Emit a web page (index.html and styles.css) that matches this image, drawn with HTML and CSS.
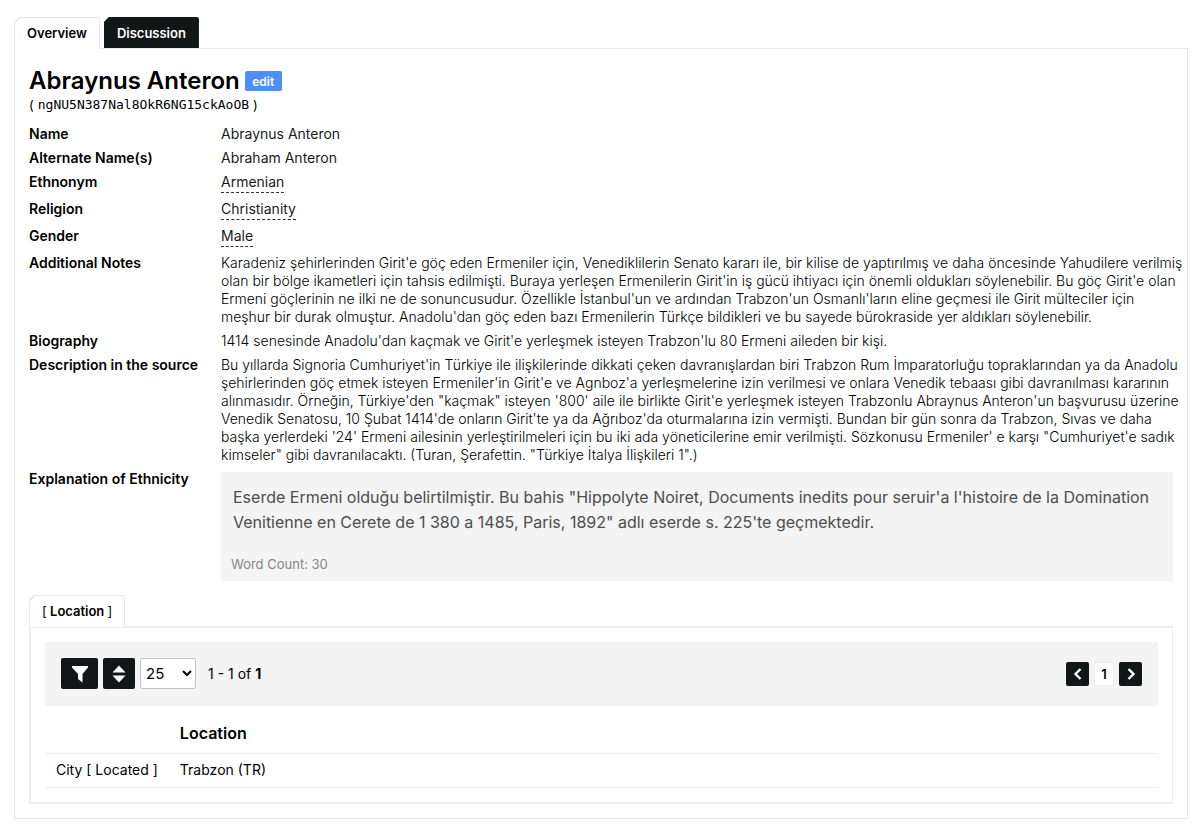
FILE: index.html
```html
<!DOCTYPE html>
<html lang="tr">
<head>
    <meta charset="UTF-8">
    <meta name="viewport" content="width=device-width, initial-scale=1.0">
    <title>Abraynus Anteron</title>
    <link rel="stylesheet" href="styles.css">
</head>
<body>
    <nav class="tabs">
        <a class="tab tab-active" href="#overview">Overview</a>
        <a class="tab tab-dark" href="#discussion">Discussion</a>
    </nav>
    <main class="panel" id="overview">
        <header class="title-row">
            <h1 class="title">Abraynus Anteron</h1>
            <button class="edit-button" type="button">edit</button>
        </header>
        <div class="object-id">(<code class="object-code">ngNU5N387Nal8OkR6NG15ckAoOB</code>)</div>

        <dl class="details">
            <dt>Name</dt>
            <dd>Abraynus Anteron</dd>
            <dt>Alternate Name(s)</dt>
            <dd>Abraham Anteron</dd>
            <dt>Ethnonym</dt>
            <dd><a class="reference" href="#armenian">Armenian</a></dd>
            <dt>Religion</dt>
            <dd><a class="reference" href="#christianity">Christianity</a></dd>
            <dt>Gender</dt>
            <dd><a class="reference" href="#male">Male</a></dd>
            <dt>Additional Notes</dt>
            <dd class="long-text">Karadeniz şehirlerinden Girit'e göç eden Ermeniler için, Venediklilerin Senato kararı ile, bir kilise de yaptırılmış ve daha öncesinde Yahudilere verilmiş<br>
                olan bir bölge ikametleri için tahsis edilmişti. Buraya yerleşen Ermenilerin Girit'in iş gücü ihtiyacı için önemli oldukları söylenebilir. Bu göç Girit'e olan<br>
                Ermeni göçlerinin ne ilki ne de sonuncusudur. Özellikle İstanbul'un ve ardından Trabzon'un Osmanlı'ların eline geçmesi ile Girit mülteciler için<br>
                meşhur bir durak olmuştur. Anadolu'dan göç eden bazı Ermenilerin Türkçe bildikleri ve bu sayede bürokraside yer aldıkları söylenebilir.</dd>
            <dt>Biography</dt>
            <dd class="long-text">1414 senesinde Anadolu'dan kaçmak ve Girit'e yerleşmek isteyen Trabzon'lu 80 Ermeni aileden bir kişi.</dd>
            <dt>Description in the source</dt>
            <dd class="long-text">Bu yıllarda Signoria Cumhuriyet'in Türkiye ile ilişkilerinde dikkati çeken davranışlardan biri Trabzon Rum İmparatorluğu topraklarından ya da Anadolu<br>
                şehirlerinden göç etmek isteyen Ermeniler'in Girit'e ve Agnboz'a yerleşmelerine izin verilmesi ve onlara Venedik tebaası gibi davranılması kararının<br>
                alınmasıdır. Örneğin, Türkiye'den "kaçmak" isteyen '800' aile ile birlikte Girit'e yerleşmek isteyen Trabzonlu Abraynus Anteron'un başvurusu üzerine<br>
                Venedik Senatosu, 10 Şubat 1414'de onların Girit'te ya da Ağrıboz'da oturmalarına izin vermişti. Bundan bir gün sonra da Trabzon, Sıvas ve daha<br>
                başka yerlerdeki '24' Ermeni ailesinin yerleştirilmeleri için bu iki ada yöneticilerine emir verilmişti. Sözkonusu Ermeniler' e karşı "Cumhuriyet'e sadık<br>
                kimseler" gibi davranılacaktı. (Turan, Şerafettin. "Türkiye İtalya İlişkileri 1".)</dd>
            <dt>Explanation of Ethnicity</dt>
            <dd class="quote">
                <p class="quote-text">Eserde Ermeni olduğu belirtilmiştir. Bu bahis "Hippolyte Noiret, Documents inedits pour seruir'a l'histoire de la Domination<br>
                    Venitienne en Cerete de 1 380 a 1485, Paris, 1892" adlı eserde s. 225'te geçmektedir.</p>
                <p class="word-count">Word Count: 30</p>
            </dd>
        </dl>

        <nav class="tabs">
            <a class="tab tab-active" href="#location"><span class="bracket">[</span> Location <span class="bracket">]</span></a>
        </nav>
        <section class="panel panel-inner" id="location">
            <div class="toolbar">
                <button class="tool-button tool-filter" type="button" aria-label="Filter">
                    <svg width="18" height="18" viewBox="0 0 18 18"><path d="M1 1h16v1.5L11.5 9v8.5L7 14V9L1 2.5z" fill="#fff"/></svg>
                </button>
                <button class="tool-button" type="button" aria-label="Sort">
                    <svg width="14" height="18" viewBox="0 0 14 18"><path d="M7 0.5L13.5 7.5H0.5zM0.5 10.5h13L7 17.5z" fill="#fff"/></svg>
                </button>
                <select class="page-size" aria-label="Rows per page">
                    <option>25</option>
                    <option>50</option>
                    <option>100</option>
                </select>
                <span class="range">1 - 1 of <b>1</b></span>
                <div class="pager">
                    <button class="pager-button" type="button" aria-label="Previous page">
                        <svg width="12" height="14" viewBox="0 0 12 14"><path d="M8.5 2L3.5 7l5 5" fill="none" stroke="#fff" stroke-width="2.4"/></svg>
                    </button>
                    <button class="pager-current" type="button">1</button>
                    <button class="pager-button" type="button" aria-label="Next page">
                        <svg width="12" height="14" viewBox="0 0 12 14"><path d="M3.5 2l5 5-5 5" fill="none" stroke="#fff" stroke-width="2.4"/></svg>
                    </button>
                </div>
            </div>
            <table class="results">
                <thead>
                    <tr>
                        <th class="type-column"></th>
                        <th>Location</th>
                    </tr>
                </thead>
                <tbody>
                    <tr>
                        <td>City [ Located ]</td>
                        <td>Trabzon (TR)</td>
                    </tr>
                </tbody>
            </table>
        </section>
    </main>
</body>
</html>
```
FILE: styles.css
```css
* {
    box-sizing: border-box;
}

body {
    margin: 0;
    padding: 17px 12px 16px 14px;
    background-color: #fff;
    color: #000;
    font-family: Inter, "Liberation Sans", sans-serif;
    font-size: 14px;
    line-height: 18px;
}

button,
select {
    font-family: inherit;
    margin: 0;
    padding: 0;
}

.tabs {
    display: flex;
    gap: 4px;
}

.tab {
    position: relative;
    height: 32px;
    padding: 6px 12px 0;
    font-size: 13px;
    font-weight: 600;
    text-decoration: none;
    color: #000;
    clip-path: polygon(5px 0, 100% 0, 100% 100%, 0 100%, 0 5px);
}

.tab-active {
    z-index: 1;
    margin-bottom: -1px;
    background: linear-gradient(135deg, #e8e8e8 5px, #fff 5px) border-box;
    border: 1px solid #e8e8e8;
    border-bottom-color: #fff;
    border-top-right-radius: 2px;
}

.tab-dark {
    height: 31px;
    padding: 7px 13px 0;
    background-color: #111616;
    color: #fff;
    border-top-right-radius: 2px;
}

.bracket {
    font-weight: 400;
}

.panel {
    border: 1px solid #e8e8e8;
    padding: 17px 14px 14px;
}

.title-row {
    display: flex;
    align-items: center;
    gap: 5px;
}

.title {
    margin: 0;
    font-size: 24px;
    font-weight: 600;
    line-height: 30px;
}

.edit-button {
    width: 37px;
    height: 20px;
    border: none;
    border-radius: 2px;
    background-color: #4c8ffb;
    color: #fff;
    font-size: 12px;
    font-weight: 600;
}

.object-id {
    display: flex;
    gap: 4px;
    font-size: 13px;
}

.object-code {
    font-family: "DejaVu Sans Mono", monospace;
}

.details {
    display: grid;
    grid-template-columns: 174px minmax(0, 1fr);
    gap: 6px 18px;
    margin: 11px 0 14px;
}

.details dt {
    font-weight: 600;
    white-space: nowrap;
}

.details dd {
    margin: 0;
    color: #1a1a1a;
}

.details .long-text {
    color: #000;
    font-weight: 300;
}

.reference {
    display: block;
    width: fit-content;
    margin-bottom: 1px;
    padding-bottom: 1px;
    border-bottom: 1px dashed #333;
    color: inherit;
    text-decoration: none;
}

.details .quote {
    margin-top: 2px;
    padding: 13px 10px 8px;
    background-color: #f4f4f4;
}

.quote-text {
    margin: 0 2px 20px;
    color: #4d4d4d;
    font-size: 16px;
    line-height: 25px;
}

.word-count {
    margin: 0;
    color: #888;
    font-size: 13px;
}

.panel-inner {
    padding: 14px;
    border: 2px solid #eee;
    border-right-width: 1px;
}

.toolbar {
    display: flex;
    align-items: center;
    gap: 5px;
    padding: 16px 16px 17px;
    background-color: #f4f4f4;
}

.tool-button,
.pager-button {
    display: flex;
    align-items: center;
    justify-content: center;
    border: none;
    border-radius: 2px;
    background-color: #111616;
}

.tool-button {
    width: 32px;
    height: 31px;
}

.tool-filter {
    width: 37px;
}

.page-size {
    width: 56px;
    height: 31px;
    padding-left: 1px;
    border: 1px solid #c4c4c4;
    border-radius: 2px;
    background-color: #fff;
    color: #000;
    font-size: 15px;
}

.range {
    margin-left: 7px;
}

.pager {
    display: flex;
    gap: 5px;
    margin-left: auto;
}

.pager-button {
    width: 23px;
    height: 24px;
}

.pager-current {
    width: 20px;
    height: 24px;
    border: 1px solid #e8e8e8;
    border-radius: 2px;
    background-color: #fff;
    color: #000;
    font-size: 13px;
    font-weight: 600;
}

.results {
    width: 100%;
    border-collapse: collapse;
}

.results th,
.results td {
    padding: 7px 11px 8px;
    border-bottom: 1px solid #efefef;
    text-align: left;
    white-space: nowrap;
}

.results th {
    padding: 18px 11px 11px;
    font-size: 16px;
    font-weight: 600;
}

.results .type-column {
    width: 123px;
}

@media (min-width: 1200px) {
    .details .long-text {
        white-space: nowrap;
    }
}
```
